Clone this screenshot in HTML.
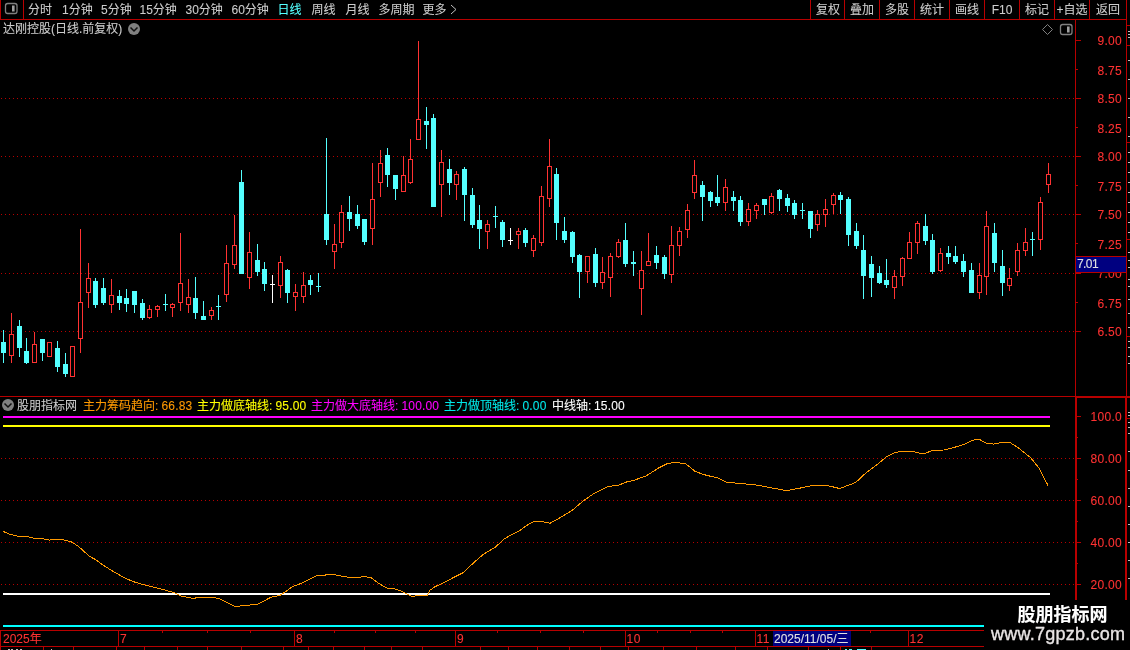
<!DOCTYPE html>
<html><head><meta charset="utf-8"><title>chart</title><style>
html,body{margin:0;padding:0;background:#000}
body{width:1130px;height:650px;position:relative;overflow:hidden;font-family:"Liberation Sans","Noto Sans CJK SC",sans-serif;font-size:12px}
svg{position:absolute;left:0;top:0}
.t{position:absolute;white-space:nowrap;line-height:12px;-webkit-text-stroke:0.1px currentColor}
#tx{position:absolute;left:0;top:0;width:1130px;height:650px;will-change:transform}
</style></head><body>
<svg width="1130" height="650" viewBox="0 0 1130 650" shape-rendering="crispEdges">
<rect x="0" y="19" width="1127" height="1" fill="#b80000"/>
<rect x="0" y="0" width="1" height="20" fill="#b80000"/>
<rect x="23" y="0" width="1" height="20" fill="#b80000"/>
<rect x="810" y="0" width="1" height="20" fill="#b80000"/>
<rect x="844" y="0" width="1" height="20" fill="#b80000"/>
<rect x="879" y="0" width="1" height="20" fill="#b80000"/>
<rect x="914" y="0" width="1" height="20" fill="#b80000"/>
<rect x="949" y="0" width="1" height="20" fill="#b80000"/>
<rect x="984" y="0" width="1" height="20" fill="#b80000"/>
<rect x="1019" y="0" width="1" height="20" fill="#b80000"/>
<rect x="1054" y="0" width="1" height="20" fill="#b80000"/>
<rect x="1089" y="0" width="1" height="20" fill="#b80000"/>
<rect x="1126" y="0" width="1" height="600" fill="#b80000"/>
<rect x="1075" y="20" width="1" height="580" fill="#b80000"/>
<rect x="1127" y="25" width="3" height="1" fill="#b80000"/>
<rect x="1127" y="45" width="3" height="1" fill="#b80000"/>
<rect x="1127" y="142" width="3" height="1" fill="#b80000"/>
<rect x="1127" y="239" width="3" height="1" fill="#b80000"/>
<rect x="1127" y="336" width="3" height="1" fill="#b80000"/>
<rect x="1127" y="418" width="3" height="1" fill="#b80000"/>
<rect x="1128" y="31" width="2" height="1" fill="#c0c0c0"/>
<rect x="1128" y="34" width="2" height="1" fill="#c0c0c0"/>
<rect x="1128" y="37" width="2" height="1" fill="#c0c0c0"/>
<rect x="1128" y="60" width="2" height="1" fill="#c0c0c0"/>
<rect x="1128" y="79" width="2" height="1" fill="#c0c0c0"/>
<rect x="1128" y="98" width="2" height="1" fill="#c0c0c0"/>
<rect x="1128" y="117" width="2" height="1" fill="#c0c0c0"/>
<rect x="1128" y="136" width="2" height="1" fill="#c0c0c0"/>
<rect x="1128" y="152" width="2" height="1" fill="#c0c0c0"/>
<rect x="1128" y="162" width="2" height="1" fill="#c0c0c0"/>
<rect x="1128" y="172" width="2" height="1" fill="#c0c0c0"/>
<rect x="1128" y="182" width="2" height="1" fill="#c0c0c0"/>
<rect x="1128" y="192" width="2" height="1" fill="#c0c0c0"/>
<rect x="1128" y="202" width="2" height="1" fill="#c0c0c0"/>
<rect x="1128" y="212" width="2" height="1" fill="#c0c0c0"/>
<rect x="1128" y="222" width="2" height="1" fill="#c0c0c0"/>
<rect x="1128" y="232" width="2" height="1" fill="#c0c0c0"/>
<rect x="1128" y="252" width="2" height="1" fill="#c0c0c0"/>
<rect x="1128" y="260" width="2" height="1" fill="#c0c0c0"/>
<rect x="1128" y="267" width="2" height="1" fill="#c0c0c0"/>
<rect x="1128" y="279" width="2" height="1" fill="#c0c0c0"/>
<rect x="1128" y="286" width="2" height="1" fill="#c0c0c0"/>
<rect x="1128" y="299" width="2" height="1" fill="#c0c0c0"/>
<rect x="1128" y="313" width="2" height="1" fill="#c0c0c0"/>
<rect x="1128" y="327" width="2" height="1" fill="#c0c0c0"/>
<rect x="1128" y="341" width="2" height="1" fill="#c0c0c0"/>
<rect x="1128" y="347" width="2" height="1" fill="#c0c0c0"/>
<rect x="1128" y="356" width="2" height="1" fill="#c0c0c0"/>
<rect x="1128" y="363" width="2" height="1" fill="#c0c0c0"/>
<rect x="1128" y="412" width="2" height="1" fill="#c0c0c0"/>
<rect x="1128" y="415" width="2" height="1" fill="#c0c0c0"/>
<rect x="1128" y="422" width="2" height="1" fill="#c0c0c0"/>
<rect x="1128" y="427" width="2" height="1" fill="#c0c0c0"/>
<rect x="1128" y="433" width="2" height="1" fill="#c0c0c0"/>
<rect x="1128" y="451" width="2" height="1" fill="#c0c0c0"/>
<rect x="1128" y="470" width="2" height="1" fill="#c0c0c0"/>
<rect x="1128" y="488" width="2" height="1" fill="#c0c0c0"/>
<rect x="1128" y="506" width="2" height="1" fill="#c0c0c0"/>
<rect x="1128" y="524" width="2" height="1" fill="#c0c0c0"/>
<rect x="1128" y="542" width="2" height="1" fill="#c0c0c0"/>
<rect x="1128" y="560" width="2" height="1" fill="#c0c0c0"/>
<rect x="1128" y="578" width="2" height="1" fill="#c0c0c0"/>
<rect x="0" y="396" width="1130" height="1" fill="#b80000"/>
<rect x="1075" y="397" width="55" height="1" fill="#b80000"/>
<rect x="1076" y="397" width="1" height="203" fill="#b80000"/>
<rect x="1125" y="397" width="1" height="203" fill="#b80000"/>
<rect x="0" y="630" width="987" height="1" fill="#b80000"/>
<rect x="0" y="646" width="987" height="1" fill="#b80000"/>
<rect x="0" y="630" width="1" height="21" fill="#b80000"/>
<path d="M1 98.5H1074" stroke="#b80000" stroke-width="1" stroke-dasharray="1 3" fill="none"/>
<path d="M1 156.5H1074" stroke="#b80000" stroke-width="1" stroke-dasharray="1 3" fill="none"/>
<path d="M1 214.5H1074" stroke="#b80000" stroke-width="1" stroke-dasharray="1 3" fill="none"/>
<path d="M1 273.5H1074" stroke="#b80000" stroke-width="1" stroke-dasharray="1 3" fill="none"/>
<path d="M1 331.5H1074" stroke="#b80000" stroke-width="1" stroke-dasharray="1 3" fill="none"/>
<rect x="1076" y="40" width="5" height="1" fill="#b80000"/>
<rect x="1076" y="69" width="2" height="1" fill="#b80000"/>
<rect x="1076" y="98" width="5" height="1" fill="#b80000"/>
<rect x="1076" y="127" width="2" height="1" fill="#b80000"/>
<rect x="1076" y="156" width="5" height="1" fill="#b80000"/>
<rect x="1076" y="185" width="2" height="1" fill="#b80000"/>
<rect x="1076" y="214" width="5" height="1" fill="#b80000"/>
<rect x="1076" y="243" width="2" height="1" fill="#b80000"/>
<rect x="1076" y="273" width="5" height="1" fill="#b80000"/>
<rect x="1076" y="302" width="2" height="1" fill="#b80000"/>
<rect x="1076" y="331" width="5" height="1" fill="#b80000"/>
<path d="M1 458.5H1074" stroke="#b80000" stroke-width="1" stroke-dasharray="1 3" fill="none"/>
<path d="M1 500.5H1074" stroke="#b80000" stroke-width="1" stroke-dasharray="1 3" fill="none"/>
<path d="M1 542.5H1074" stroke="#b80000" stroke-width="1" stroke-dasharray="1 3" fill="none"/>
<path d="M1 584.5H1074" stroke="#b80000" stroke-width="1" stroke-dasharray="1 3" fill="none"/>
<rect x="1077" y="416" width="4" height="1" fill="#b80000"/>
<rect x="1077" y="437" width="1" height="1" fill="#b80000"/>
<rect x="1077" y="458" width="4" height="1" fill="#b80000"/>
<rect x="1077" y="479" width="1" height="1" fill="#b80000"/>
<rect x="1077" y="500" width="4" height="1" fill="#b80000"/>
<rect x="1077" y="521" width="1" height="1" fill="#b80000"/>
<rect x="1077" y="542" width="4" height="1" fill="#b80000"/>
<rect x="1077" y="563" width="1" height="1" fill="#b80000"/>
<rect x="1077" y="584" width="4" height="1" fill="#b80000"/>
<rect x="3" y="330" width="1" height="33" fill="#54ffff"/>
<rect x="1" y="342" width="5" height="11" fill="#54ffff"/>
<rect x="11" y="313" width="1" height="21" fill="#ff3232"/>
<rect x="11" y="355" width="1" height="8" fill="#ff3232"/>
<rect x="9.5" y="334.5" width="4" height="21" fill="#000" stroke="#ff3232" stroke-width="1"/>
<rect x="19" y="320" width="1" height="37" fill="#54ffff"/>
<rect x="17" y="326" width="5" height="22" fill="#54ffff"/>
<rect x="26" y="338" width="1" height="26" fill="#54ffff"/>
<rect x="24" y="351" width="5" height="12" fill="#54ffff"/>
<rect x="34" y="332" width="1" height="12" fill="#ff3232"/>
<rect x="32.5" y="344.5" width="4" height="18" fill="#000" stroke="#ff3232" stroke-width="1"/>
<rect x="42" y="339" width="1" height="22" fill="#54ffff"/>
<rect x="40" y="339" width="5" height="14" fill="#54ffff"/>
<rect x="47.5" y="342.5" width="4" height="14" fill="#000" stroke="#ff3232" stroke-width="1"/>
<rect x="57" y="341" width="1" height="31" fill="#54ffff"/>
<rect x="55" y="348" width="5" height="19" fill="#54ffff"/>
<rect x="65" y="353" width="1" height="24" fill="#54ffff"/>
<rect x="63" y="364" width="5" height="10" fill="#54ffff"/>
<rect x="70.5" y="346.5" width="4" height="30" fill="#000" stroke="#ff3232" stroke-width="1"/>
<rect x="80" y="229" width="1" height="73" fill="#ff3232"/>
<rect x="80" y="338" width="1" height="15" fill="#ff3232"/>
<rect x="78.5" y="302.5" width="4" height="36" fill="#000" stroke="#ff3232" stroke-width="1"/>
<rect x="88" y="263" width="1" height="15" fill="#ff3232"/>
<rect x="88" y="292" width="1" height="16" fill="#ff3232"/>
<rect x="86.5" y="278.5" width="4" height="14" fill="#000" stroke="#ff3232" stroke-width="1"/>
<rect x="95" y="278" width="1" height="30" fill="#54ffff"/>
<rect x="93" y="281" width="5" height="24" fill="#54ffff"/>
<rect x="103" y="278" width="1" height="27" fill="#54ffff"/>
<rect x="101" y="288" width="5" height="15" fill="#54ffff"/>
<rect x="111" y="279" width="1" height="16" fill="#ff3232"/>
<rect x="111" y="304" width="1" height="9" fill="#ff3232"/>
<rect x="109.5" y="295.5" width="4" height="9" fill="#000" stroke="#ff3232" stroke-width="1"/>
<rect x="119" y="290" width="1" height="20" fill="#54ffff"/>
<rect x="117" y="296" width="5" height="7" fill="#54ffff"/>
<rect x="126" y="289" width="1" height="23" fill="#54ffff"/>
<rect x="124" y="298" width="5" height="6" fill="#54ffff"/>
<rect x="134" y="291" width="1" height="22" fill="#54ffff"/>
<rect x="132" y="291" width="5" height="14" fill="#54ffff"/>
<rect x="142" y="299" width="1" height="21" fill="#54ffff"/>
<rect x="140" y="303" width="5" height="15" fill="#54ffff"/>
<rect x="149" y="305" width="1" height="4" fill="#ff3232"/>
<rect x="149" y="317" width="1" height="2" fill="#ff3232"/>
<rect x="147.5" y="309.5" width="4" height="8" fill="#000" stroke="#ff3232" stroke-width="1"/>
<rect x="157" y="305" width="1" height="1" fill="#ff3232"/>
<rect x="157" y="309" width="1" height="8" fill="#ff3232"/>
<rect x="155.5" y="306.5" width="4" height="3" fill="#000" stroke="#ff3232" stroke-width="1"/>
<rect x="165" y="294" width="1" height="17" fill="#54ffff"/>
<rect x="163" y="304" width="5" height="1" fill="#54ffff"/>
<rect x="172" y="303" width="1" height="1" fill="#ff3232"/>
<rect x="172" y="307" width="1" height="10" fill="#ff3232"/>
<rect x="170.5" y="304.5" width="4" height="3" fill="#000" stroke="#ff3232" stroke-width="1"/>
<rect x="180" y="233" width="1" height="50" fill="#ff3232"/>
<rect x="180" y="302" width="1" height="9" fill="#ff3232"/>
<rect x="178.5" y="283.5" width="4" height="19" fill="#000" stroke="#ff3232" stroke-width="1"/>
<rect x="188" y="279" width="1" height="18" fill="#ff3232"/>
<rect x="188" y="304" width="1" height="9" fill="#ff3232"/>
<rect x="186.5" y="297.5" width="4" height="7" fill="#000" stroke="#ff3232" stroke-width="1"/>
<rect x="195" y="277" width="1" height="42" fill="#54ffff"/>
<rect x="193" y="298" width="5" height="15" fill="#54ffff"/>
<rect x="203" y="301" width="1" height="19" fill="#54ffff"/>
<rect x="201" y="316" width="5" height="4" fill="#54ffff"/>
<rect x="211" y="307" width="1" height="3" fill="#ff3232"/>
<rect x="211" y="315" width="1" height="5" fill="#ff3232"/>
<rect x="209.5" y="310.5" width="4" height="5" fill="#000" stroke="#ff3232" stroke-width="1"/>
<rect x="218" y="295" width="1" height="25" fill="#54ffff"/>
<rect x="216" y="306" width="5" height="1" fill="#54ffff"/>
<rect x="226" y="245" width="1" height="18" fill="#ff3232"/>
<rect x="226" y="294" width="1" height="8" fill="#ff3232"/>
<rect x="224.5" y="263.5" width="4" height="31" fill="#000" stroke="#ff3232" stroke-width="1"/>
<rect x="234" y="215" width="1" height="30" fill="#ff3232"/>
<rect x="234" y="264" width="1" height="5" fill="#ff3232"/>
<rect x="232.5" y="245.5" width="4" height="19" fill="#000" stroke="#ff3232" stroke-width="1"/>
<rect x="241" y="170" width="1" height="104" fill="#54ffff"/>
<rect x="239" y="182" width="5" height="92" fill="#54ffff"/>
<rect x="249" y="232" width="1" height="20" fill="#ff3232"/>
<rect x="249" y="277" width="1" height="12" fill="#ff3232"/>
<rect x="247.5" y="252.5" width="4" height="25" fill="#000" stroke="#ff3232" stroke-width="1"/>
<rect x="257" y="244" width="1" height="32" fill="#54ffff"/>
<rect x="255" y="260" width="5" height="12" fill="#54ffff"/>
<rect x="264" y="262" width="1" height="29" fill="#54ffff"/>
<rect x="262" y="269" width="5" height="15" fill="#54ffff"/>
<rect x="272" y="275" width="1" height="28" fill="#ffffff"/>
<rect x="270" y="284" width="5" height="1" fill="#ffffff"/>
<rect x="280" y="256" width="1" height="6" fill="#ff3232"/>
<rect x="280" y="285" width="1" height="13" fill="#ff3232"/>
<rect x="278.5" y="262.5" width="4" height="23" fill="#000" stroke="#ff3232" stroke-width="1"/>
<rect x="287" y="269" width="1" height="34" fill="#54ffff"/>
<rect x="285" y="270" width="5" height="23" fill="#54ffff"/>
<rect x="295" y="284" width="1" height="8" fill="#ff3232"/>
<rect x="295" y="296" width="1" height="15" fill="#ff3232"/>
<rect x="293.5" y="292.5" width="4" height="4" fill="#000" stroke="#ff3232" stroke-width="1"/>
<rect x="303" y="272" width="1" height="13" fill="#ff3232"/>
<rect x="303" y="296" width="1" height="7" fill="#ff3232"/>
<rect x="301.5" y="285.5" width="4" height="11" fill="#000" stroke="#ff3232" stroke-width="1"/>
<rect x="310" y="275" width="1" height="20" fill="#54ffff"/>
<rect x="308" y="280" width="5" height="5" fill="#54ffff"/>
<rect x="318" y="273" width="1" height="19" fill="#54ffff"/>
<rect x="316" y="286" width="5" height="1" fill="#54ffff"/>
<rect x="326" y="138" width="1" height="107" fill="#54ffff"/>
<rect x="324" y="214" width="5" height="26" fill="#54ffff"/>
<rect x="334" y="224" width="1" height="20" fill="#ff3232"/>
<rect x="334" y="251" width="1" height="18" fill="#ff3232"/>
<rect x="332.5" y="244.5" width="4" height="7" fill="#000" stroke="#ff3232" stroke-width="1"/>
<rect x="341" y="205" width="1" height="7" fill="#ff3232"/>
<rect x="341" y="242" width="1" height="6" fill="#ff3232"/>
<rect x="339.5" y="212.5" width="4" height="30" fill="#000" stroke="#ff3232" stroke-width="1"/>
<rect x="349" y="196" width="1" height="35" fill="#54ffff"/>
<rect x="347" y="212" width="5" height="7" fill="#54ffff"/>
<rect x="357" y="205" width="1" height="24" fill="#54ffff"/>
<rect x="355" y="214" width="5" height="12" fill="#54ffff"/>
<rect x="364" y="219" width="1" height="26" fill="#54ffff"/>
<rect x="362" y="219" width="5" height="23" fill="#54ffff"/>
<rect x="372" y="163" width="1" height="36" fill="#ff3232"/>
<rect x="372" y="228" width="1" height="17" fill="#ff3232"/>
<rect x="370.5" y="199.5" width="4" height="29" fill="#000" stroke="#ff3232" stroke-width="1"/>
<rect x="380" y="150" width="1" height="13" fill="#ff3232"/>
<rect x="380" y="182" width="1" height="15" fill="#ff3232"/>
<rect x="378.5" y="163.5" width="4" height="19" fill="#000" stroke="#ff3232" stroke-width="1"/>
<rect x="387" y="148" width="1" height="39" fill="#54ffff"/>
<rect x="385" y="155" width="5" height="20" fill="#54ffff"/>
<rect x="395" y="175" width="1" height="25" fill="#54ffff"/>
<rect x="393" y="175" width="5" height="14" fill="#54ffff"/>
<rect x="403" y="156" width="1" height="19" fill="#ff3232"/>
<rect x="401.5" y="175.5" width="4" height="16" fill="#000" stroke="#ff3232" stroke-width="1"/>
<rect x="410" y="139" width="1" height="20" fill="#ff3232"/>
<rect x="410" y="182" width="1" height="2" fill="#ff3232"/>
<rect x="408.5" y="159.5" width="4" height="23" fill="#000" stroke="#ff3232" stroke-width="1"/>
<rect x="418" y="41" width="1" height="78" fill="#ff3232"/>
<rect x="416.5" y="119.5" width="4" height="20" fill="#000" stroke="#ff3232" stroke-width="1"/>
<rect x="426" y="107" width="1" height="42" fill="#54ffff"/>
<rect x="424" y="121" width="5" height="4" fill="#54ffff"/>
<rect x="433" y="114" width="1" height="93" fill="#54ffff"/>
<rect x="431" y="118" width="5" height="89" fill="#54ffff"/>
<rect x="441" y="150" width="1" height="12" fill="#ff3232"/>
<rect x="441" y="184" width="1" height="33" fill="#ff3232"/>
<rect x="439.5" y="162.5" width="4" height="22" fill="#000" stroke="#ff3232" stroke-width="1"/>
<rect x="449" y="159" width="1" height="36" fill="#54ffff"/>
<rect x="447" y="169" width="5" height="14" fill="#54ffff"/>
<rect x="456" y="171" width="1" height="3" fill="#ff3232"/>
<rect x="456" y="184" width="1" height="16" fill="#ff3232"/>
<rect x="454.5" y="174.5" width="4" height="10" fill="#000" stroke="#ff3232" stroke-width="1"/>
<rect x="464" y="167" width="1" height="54" fill="#54ffff"/>
<rect x="462" y="169" width="5" height="26" fill="#54ffff"/>
<rect x="472" y="188" width="1" height="40" fill="#54ffff"/>
<rect x="470" y="195" width="5" height="30" fill="#54ffff"/>
<rect x="479" y="205" width="1" height="44" fill="#54ffff"/>
<rect x="477" y="220" width="5" height="9" fill="#54ffff"/>
<rect x="487" y="220" width="1" height="4" fill="#ff3232"/>
<rect x="487" y="231" width="1" height="18" fill="#ff3232"/>
<rect x="485.5" y="224.5" width="4" height="7" fill="#000" stroke="#ff3232" stroke-width="1"/>
<rect x="495" y="206" width="1" height="22" fill="#54ffff"/>
<rect x="493" y="216" width="5" height="1" fill="#54ffff"/>
<rect x="502" y="220" width="1" height="27" fill="#54ffff"/>
<rect x="500" y="222" width="5" height="18" fill="#54ffff"/>
<rect x="510" y="228" width="1" height="17" fill="#ffffff"/>
<rect x="508" y="240" width="5" height="1" fill="#ffffff"/>
<rect x="518" y="228" width="1" height="3" fill="#ff3232"/>
<rect x="518" y="234" width="1" height="15" fill="#ff3232"/>
<rect x="516.5" y="231.5" width="4" height="3" fill="#000" stroke="#ff3232" stroke-width="1"/>
<rect x="525" y="228" width="1" height="19" fill="#54ffff"/>
<rect x="523" y="230" width="5" height="13" fill="#54ffff"/>
<rect x="533" y="235" width="1" height="3" fill="#ff3232"/>
<rect x="533" y="250" width="1" height="7" fill="#ff3232"/>
<rect x="531.5" y="238.5" width="4" height="12" fill="#000" stroke="#ff3232" stroke-width="1"/>
<rect x="541" y="186" width="1" height="10" fill="#ff3232"/>
<rect x="541" y="242" width="1" height="4" fill="#ff3232"/>
<rect x="539.5" y="196.5" width="4" height="46" fill="#000" stroke="#ff3232" stroke-width="1"/>
<rect x="549" y="139" width="1" height="27" fill="#ff3232"/>
<rect x="549" y="198" width="1" height="9" fill="#ff3232"/>
<rect x="547.5" y="166.5" width="4" height="32" fill="#000" stroke="#ff3232" stroke-width="1"/>
<rect x="556" y="168" width="1" height="72" fill="#54ffff"/>
<rect x="554" y="174" width="5" height="49" fill="#54ffff"/>
<rect x="564" y="217" width="1" height="26" fill="#54ffff"/>
<rect x="562" y="231" width="5" height="9" fill="#54ffff"/>
<rect x="572" y="231" width="1" height="32" fill="#54ffff"/>
<rect x="570" y="232" width="5" height="25" fill="#54ffff"/>
<rect x="579" y="254" width="1" height="44" fill="#54ffff"/>
<rect x="577" y="255" width="5" height="17" fill="#54ffff"/>
<rect x="587" y="271" width="1" height="12" fill="#ff3232"/>
<rect x="585.5" y="256.5" width="4" height="15" fill="#000" stroke="#ff3232" stroke-width="1"/>
<rect x="595" y="248" width="1" height="39" fill="#54ffff"/>
<rect x="593" y="254" width="5" height="29" fill="#54ffff"/>
<rect x="602" y="257" width="1" height="15" fill="#ff3232"/>
<rect x="602" y="282" width="1" height="7" fill="#ff3232"/>
<rect x="600.5" y="272.5" width="4" height="10" fill="#000" stroke="#ff3232" stroke-width="1"/>
<rect x="610" y="253" width="1" height="3" fill="#ff3232"/>
<rect x="610" y="277" width="1" height="20" fill="#ff3232"/>
<rect x="608.5" y="256.5" width="4" height="21" fill="#000" stroke="#ff3232" stroke-width="1"/>
<rect x="618" y="239" width="1" height="3" fill="#ff3232"/>
<rect x="618" y="256" width="1" height="2" fill="#ff3232"/>
<rect x="616.5" y="242.5" width="4" height="14" fill="#000" stroke="#ff3232" stroke-width="1"/>
<rect x="625" y="223" width="1" height="44" fill="#54ffff"/>
<rect x="623" y="240" width="5" height="24" fill="#54ffff"/>
<rect x="633" y="251" width="1" height="25" fill="#54ffff"/>
<rect x="631" y="262" width="5" height="2" fill="#54ffff"/>
<rect x="641" y="251" width="1" height="19" fill="#ff3232"/>
<rect x="641" y="288" width="1" height="27" fill="#ff3232"/>
<rect x="639.5" y="270.5" width="4" height="18" fill="#000" stroke="#ff3232" stroke-width="1"/>
<rect x="648" y="233" width="1" height="28" fill="#ff3232"/>
<rect x="646.5" y="261.5" width="4" height="4" fill="#000" stroke="#ff3232" stroke-width="1"/>
<rect x="656" y="246" width="1" height="23" fill="#54ffff"/>
<rect x="654" y="255" width="5" height="8" fill="#54ffff"/>
<rect x="664" y="255" width="1" height="24" fill="#54ffff"/>
<rect x="662" y="257" width="5" height="17" fill="#54ffff"/>
<rect x="671" y="226" width="1" height="19" fill="#ff3232"/>
<rect x="671" y="274" width="1" height="9" fill="#ff3232"/>
<rect x="669.5" y="245.5" width="4" height="29" fill="#000" stroke="#ff3232" stroke-width="1"/>
<rect x="679" y="227" width="1" height="4" fill="#ff3232"/>
<rect x="679" y="245" width="1" height="11" fill="#ff3232"/>
<rect x="677.5" y="231.5" width="4" height="14" fill="#000" stroke="#ff3232" stroke-width="1"/>
<rect x="687" y="204" width="1" height="6" fill="#ff3232"/>
<rect x="687" y="229" width="1" height="9" fill="#ff3232"/>
<rect x="685.5" y="210.5" width="4" height="19" fill="#000" stroke="#ff3232" stroke-width="1"/>
<rect x="694" y="160" width="1" height="15" fill="#ff3232"/>
<rect x="694" y="192" width="1" height="7" fill="#ff3232"/>
<rect x="692.5" y="175.5" width="4" height="17" fill="#000" stroke="#ff3232" stroke-width="1"/>
<rect x="702" y="181" width="1" height="40" fill="#54ffff"/>
<rect x="700" y="185" width="5" height="12" fill="#54ffff"/>
<rect x="710" y="191" width="1" height="16" fill="#54ffff"/>
<rect x="708" y="192" width="5" height="9" fill="#54ffff"/>
<rect x="717" y="175" width="1" height="31" fill="#54ffff"/>
<rect x="715" y="197" width="5" height="6" fill="#54ffff"/>
<rect x="725" y="179" width="1" height="8" fill="#ff3232"/>
<rect x="725" y="202" width="1" height="9" fill="#ff3232"/>
<rect x="723.5" y="187.5" width="4" height="15" fill="#000" stroke="#ff3232" stroke-width="1"/>
<rect x="733" y="191" width="1" height="20" fill="#54ffff"/>
<rect x="731" y="197" width="5" height="4" fill="#54ffff"/>
<rect x="740" y="196" width="1" height="30" fill="#54ffff"/>
<rect x="738" y="200" width="5" height="22" fill="#54ffff"/>
<rect x="748" y="203" width="1" height="6" fill="#ff3232"/>
<rect x="748" y="221" width="1" height="5" fill="#ff3232"/>
<rect x="746.5" y="209.5" width="4" height="12" fill="#000" stroke="#ff3232" stroke-width="1"/>
<rect x="756" y="203" width="1" height="2" fill="#ff3232"/>
<rect x="756" y="210" width="1" height="9" fill="#ff3232"/>
<rect x="754.5" y="205.5" width="4" height="5" fill="#000" stroke="#ff3232" stroke-width="1"/>
<rect x="764" y="199" width="1" height="16" fill="#54ffff"/>
<rect x="762" y="199" width="5" height="6" fill="#54ffff"/>
<rect x="771" y="193" width="1" height="3" fill="#ff3232"/>
<rect x="771" y="212" width="1" height="2" fill="#ff3232"/>
<rect x="769.5" y="196.5" width="4" height="16" fill="#000" stroke="#ff3232" stroke-width="1"/>
<rect x="779" y="189" width="1" height="22" fill="#54ffff"/>
<rect x="777" y="190" width="5" height="9" fill="#54ffff"/>
<rect x="787" y="194" width="1" height="18" fill="#54ffff"/>
<rect x="785" y="198" width="5" height="8" fill="#54ffff"/>
<rect x="794" y="200" width="1" height="19" fill="#54ffff"/>
<rect x="792" y="203" width="5" height="12" fill="#54ffff"/>
<rect x="802" y="203" width="1" height="16" fill="#54ffff"/>
<rect x="800" y="210" width="5" height="1" fill="#54ffff"/>
<rect x="810" y="211" width="1" height="27" fill="#54ffff"/>
<rect x="808" y="211" width="5" height="18" fill="#54ffff"/>
<rect x="817" y="210" width="1" height="4" fill="#ff3232"/>
<rect x="817" y="224" width="1" height="7" fill="#ff3232"/>
<rect x="815.5" y="214.5" width="4" height="10" fill="#000" stroke="#ff3232" stroke-width="1"/>
<rect x="825" y="199" width="1" height="10" fill="#ff3232"/>
<rect x="825" y="214" width="1" height="13" fill="#ff3232"/>
<rect x="823.5" y="209.5" width="4" height="5" fill="#000" stroke="#ff3232" stroke-width="1"/>
<rect x="833" y="193" width="1" height="2" fill="#ff3232"/>
<rect x="833" y="204" width="1" height="10" fill="#ff3232"/>
<rect x="831.5" y="195.5" width="4" height="9" fill="#000" stroke="#ff3232" stroke-width="1"/>
<rect x="840" y="192" width="1" height="22" fill="#54ffff"/>
<rect x="838" y="195" width="5" height="5" fill="#54ffff"/>
<rect x="848" y="197" width="1" height="49" fill="#54ffff"/>
<rect x="846" y="199" width="5" height="36" fill="#54ffff"/>
<rect x="856" y="223" width="1" height="26" fill="#54ffff"/>
<rect x="854" y="231" width="5" height="15" fill="#54ffff"/>
<rect x="863" y="235" width="1" height="64" fill="#54ffff"/>
<rect x="861" y="250" width="5" height="26" fill="#54ffff"/>
<rect x="871" y="256" width="1" height="41" fill="#54ffff"/>
<rect x="869" y="264" width="5" height="14" fill="#54ffff"/>
<rect x="879" y="266" width="1" height="18" fill="#54ffff"/>
<rect x="877" y="273" width="5" height="10" fill="#54ffff"/>
<rect x="886" y="259" width="1" height="29" fill="#54ffff"/>
<rect x="884" y="280" width="5" height="5" fill="#54ffff"/>
<rect x="894" y="270" width="1" height="6" fill="#ff3232"/>
<rect x="894" y="287" width="1" height="12" fill="#ff3232"/>
<rect x="892.5" y="276.5" width="4" height="11" fill="#000" stroke="#ff3232" stroke-width="1"/>
<rect x="902" y="257" width="1" height="1" fill="#ff3232"/>
<rect x="902" y="276" width="1" height="10" fill="#ff3232"/>
<rect x="900.5" y="258.5" width="4" height="18" fill="#000" stroke="#ff3232" stroke-width="1"/>
<rect x="909" y="232" width="1" height="10" fill="#ff3232"/>
<rect x="907.5" y="242.5" width="4" height="16" fill="#000" stroke="#ff3232" stroke-width="1"/>
<rect x="917" y="221" width="1" height="2" fill="#ff3232"/>
<rect x="917" y="242" width="1" height="12" fill="#ff3232"/>
<rect x="915.5" y="223.5" width="4" height="19" fill="#000" stroke="#ff3232" stroke-width="1"/>
<rect x="925" y="214" width="1" height="31" fill="#54ffff"/>
<rect x="923" y="226" width="5" height="15" fill="#54ffff"/>
<rect x="932" y="234" width="1" height="40" fill="#54ffff"/>
<rect x="930" y="240" width="5" height="32" fill="#54ffff"/>
<rect x="940" y="248" width="1" height="5" fill="#ff3232"/>
<rect x="940" y="270" width="1" height="2" fill="#ff3232"/>
<rect x="938.5" y="253.5" width="4" height="17" fill="#000" stroke="#ff3232" stroke-width="1"/>
<rect x="948" y="246" width="1" height="18" fill="#54ffff"/>
<rect x="946" y="253" width="5" height="4" fill="#54ffff"/>
<rect x="955" y="246" width="1" height="18" fill="#54ffff"/>
<rect x="953" y="256" width="5" height="6" fill="#54ffff"/>
<rect x="963" y="254" width="1" height="23" fill="#54ffff"/>
<rect x="961" y="261" width="5" height="11" fill="#54ffff"/>
<rect x="971" y="263" width="1" height="30" fill="#54ffff"/>
<rect x="969" y="270" width="5" height="23" fill="#54ffff"/>
<rect x="979" y="263" width="1" height="12" fill="#ff3232"/>
<rect x="979" y="292" width="1" height="7" fill="#ff3232"/>
<rect x="977.5" y="275.5" width="4" height="17" fill="#000" stroke="#ff3232" stroke-width="1"/>
<rect x="986" y="211" width="1" height="15" fill="#ff3232"/>
<rect x="986" y="276" width="1" height="19" fill="#ff3232"/>
<rect x="984.5" y="226.5" width="4" height="50" fill="#000" stroke="#ff3232" stroke-width="1"/>
<rect x="994" y="223" width="1" height="49" fill="#54ffff"/>
<rect x="992" y="233" width="5" height="30" fill="#54ffff"/>
<rect x="1002" y="250" width="1" height="46" fill="#54ffff"/>
<rect x="1000" y="266" width="5" height="17" fill="#54ffff"/>
<rect x="1009" y="268" width="1" height="10" fill="#ff3232"/>
<rect x="1009" y="285" width="1" height="6" fill="#ff3232"/>
<rect x="1007.5" y="278.5" width="4" height="7" fill="#000" stroke="#ff3232" stroke-width="1"/>
<rect x="1017" y="243" width="1" height="7" fill="#ff3232"/>
<rect x="1017" y="271" width="1" height="5" fill="#ff3232"/>
<rect x="1015.5" y="250.5" width="4" height="21" fill="#000" stroke="#ff3232" stroke-width="1"/>
<rect x="1025" y="228" width="1" height="14" fill="#ff3232"/>
<rect x="1025" y="250" width="1" height="6" fill="#ff3232"/>
<rect x="1023.5" y="242.5" width="4" height="8" fill="#000" stroke="#ff3232" stroke-width="1"/>
<rect x="1032" y="232" width="1" height="24" fill="#54ffff"/>
<rect x="1030" y="239" width="5" height="1" fill="#54ffff"/>
<rect x="1040" y="197" width="1" height="5" fill="#ff3232"/>
<rect x="1040" y="239" width="1" height="11" fill="#ff3232"/>
<rect x="1038.5" y="202.5" width="4" height="37" fill="#000" stroke="#ff3232" stroke-width="1"/>
<rect x="1048" y="163" width="1" height="11" fill="#ff3232"/>
<rect x="1048" y="184" width="1" height="9" fill="#ff3232"/>
<rect x="1046.5" y="174.5" width="4" height="10" fill="#000" stroke="#ff3232" stroke-width="1"/>
<rect x="3" y="416" width="1047" height="2" fill="#ff00ff"/>
<rect x="3" y="425" width="1047" height="2" fill="#ffff00"/>
<rect x="3" y="593" width="1047" height="2" fill="#ffffff"/>
<rect x="3" y="625" width="984" height="2" fill="#00ffff"/>
<path d="M3.2 531.5 L9.9 534.2 L18.6 536.4 L27.3 536.7 L34.7 538.4 L43.4 538.9 L49.6 540.1 L57.0 539.1 L64.4 540.1 L71.9 542.1 L79.3 547.1 L89.2 556.2 L95.4 559.5 L104.0 565.7 L114.0 571.9 L123.9 577.6 L133.8 581.8 L143.7 584.7 L153.6 587.2 L163.5 589.7 L173.4 592.4 L180.9 596.1 L193.3 598.4 L200.7 597.1 L213.1 597.4 L219.3 598.6 L235.4 606.5 L247.8 605.3 L257.7 604.1 L271.3 597.1 L279.9 595.4 L284.9 592.2 L292.3 586.7 L302.2 583.0 L309.6 579.3 L317.1 575.6 L324.5 575.1 L333.2 574.3 L341.9 576.3 L349.3 577.3 L359.2 577.3 L364.2 576.3 L371.6 578.0 L379.0 583.5 L386.5 588.0 L396.4 589.2 L403.8 592.2 L411.2 596.2 L418.7 595.8 L427.3 595.6 L429.8 590.4 L434.8 586.7 L443.4 583.0 L453.3 577.6 L463.3 572.6 L473.2 563.2 L483.1 554.5 L495.5 547.1 L504.1 538.9 L511.6 534.7 L520.2 530.2 L527.7 524.8 L533.9 521.6 L542.5 521.6 L549.9 523.3 L559.8 517.9 L572.2 510.4 L582.1 501.8 L594.5 493.1 L606.9 486.9 L619.3 484.9 L626.7 481.9 L634.2 480.2 L646.5 475.7 L658.9 467.8 L667.6 463.4 L676.3 462.4 L686.2 464.1 L694.9 471.3 L703.5 474.5 L718.4 478.2 L727.1 482.4 L743.2 483.7 L758.0 485.2 L772.9 488.1 L786.5 490.6 L797.7 488.6 L812.4 485.5 L827.3 485.5 L839.6 488.5 L855.7 482.5 L865.7 473.1 L876.8 464.9 L886.7 456.5 L894.2 452.8 L901.6 451.3 L911.5 451.3 L923.9 454.0 L932.6 450.3 L943.7 450.0 L953.6 447.6 L963.5 444.6 L973.4 440.1 L978.9 439.1 L985.8 442.9 L993.3 444.1 L1001.9 442.4 L1010.1 442.6 L1018.0 447.6 L1030.4 457.5 L1039.1 468.1 L1048.0 485.5" stroke="#ff9900" stroke-width="1" fill="none" stroke-linejoin="round"/>
<rect x="118" y="630" width="1" height="17" fill="#b80000"/>
<rect x="294" y="630" width="1" height="17" fill="#b80000"/>
<rect x="455" y="630" width="1" height="17" fill="#b80000"/>
<rect x="625" y="630" width="1" height="17" fill="#b80000"/>
<rect x="755" y="630" width="1" height="17" fill="#b80000"/>
<rect x="908" y="630" width="1" height="17" fill="#b80000"/>
<rect x="162" y="631" width="1" height="2" fill="#b80000"/>
<rect x="207" y="631" width="1" height="2" fill="#b80000"/>
<rect x="250" y="631" width="1" height="2" fill="#b80000"/>
<rect x="334" y="631" width="1" height="2" fill="#b80000"/>
<rect x="375" y="631" width="1" height="2" fill="#b80000"/>
<rect x="415" y="631" width="1" height="2" fill="#b80000"/>
<rect x="497" y="631" width="1" height="2" fill="#b80000"/>
<rect x="540" y="631" width="1" height="2" fill="#b80000"/>
<rect x="583" y="631" width="1" height="2" fill="#b80000"/>
<rect x="657" y="631" width="1" height="2" fill="#b80000"/>
<rect x="690" y="631" width="1" height="2" fill="#b80000"/>
<rect x="722" y="631" width="1" height="2" fill="#b80000"/>
<rect x="870" y="631" width="1" height="2" fill="#b80000"/>
<rect x="43" y="647" width="1" height="4" fill="#b80000"/>
<rect x="73" y="647" width="1" height="4" fill="#b80000"/>
<rect x="116" y="647" width="1" height="4" fill="#b80000"/>
<rect x="144" y="647" width="1" height="4" fill="#b80000"/>
<rect x="177" y="647" width="1" height="4" fill="#b80000"/>
<rect x="207" y="647" width="1" height="4" fill="#b80000"/>
<rect x="241" y="647" width="1" height="4" fill="#b80000"/>
<rect x="283" y="647" width="1" height="4" fill="#b80000"/>
<rect x="308" y="647" width="1" height="4" fill="#b80000"/>
<rect x="333" y="647" width="1" height="4" fill="#b80000"/>
<rect x="364" y="647" width="1" height="4" fill="#b80000"/>
<rect x="391" y="647" width="1" height="4" fill="#b80000"/>
<rect x="422" y="647" width="1" height="4" fill="#b80000"/>
<rect x="480" y="647" width="1" height="4" fill="#b80000"/>
<rect x="508" y="647" width="1" height="4" fill="#b80000"/>
<rect x="537" y="647" width="1" height="4" fill="#b80000"/>
<rect x="569" y="647" width="1" height="4" fill="#b80000"/>
<rect x="600" y="647" width="1" height="4" fill="#b80000"/>
<rect x="628" y="647" width="1" height="4" fill="#b80000"/>
<rect x="663" y="647" width="1" height="4" fill="#b80000"/>
<rect x="696" y="647" width="1" height="4" fill="#b80000"/>
<rect x="735" y="647" width="1" height="4" fill="#b80000"/>
<rect x="767" y="647" width="1" height="4" fill="#b80000"/>
<rect x="871" y="647" width="1" height="4" fill="#b80000"/>
<rect x="808" y="647" width="1" height="4" fill="#b80000"/>
<rect x="840" y="647" width="1" height="4" fill="#b80000"/>
<rect x="8" y="649" width="2" height="1" fill="#c0c0c0"/>
<rect x="11" y="649" width="2" height="1" fill="#c0c0c0"/>
<rect x="16" y="649" width="2" height="1" fill="#c0c0c0"/>
<rect x="20" y="649" width="2" height="1" fill="#c0c0c0"/>
<rect x="51" y="649" width="1" height="1" fill="#c0c0c0"/>
<rect x="828" y="649" width="1" height="1" fill="#c0c0c0"/>
<rect x="845" y="649" width="2" height="1" fill="#54ffff"/>
<rect x="849" y="649" width="3" height="1" fill="#54ffff"/>
<rect x="857" y="649" width="9" height="1" fill="#54ffff"/>
<rect x="773" y="631" width="78" height="15" fill="#000080"/>
<rect x="984" y="600" width="146" height="50" fill="#000"/>
<g shape-rendering="geometricPrecision">
<rect x="5.5" y="3.5" width="11.5" height="10" rx="2.2" fill="none" stroke="#808080" stroke-width="1.3"/>
<rect x="12" y="5.5" width="2.6" height="6" fill="#a0a0a0"/>
<rect x="1060.5" y="24.5" width="11.5" height="10" rx="2.2" fill="none" stroke="#808080" stroke-width="1.3"/>
<rect x="1067" y="26.5" width="2.6" height="6" fill="#a0a0a0"/>
<path d="M1047.5 24.5L1052.5 29.5L1047.5 34.5L1042.5 29.5Z" fill="none" stroke="#808080" stroke-width="1"/>
<circle cx="134" cy="29" r="6" fill="#808080"/>
<path d="M130.5 27.5L134 31L137.5 27.5" fill="none" stroke="#101010" stroke-width="1.5"/>
<circle cx="8" cy="405" r="6" fill="#808080"/>
<path d="M4.5 403.5L8 407L11.5 403.5" fill="none" stroke="#101010" stroke-width="1.5"/>
<path d="M451 5L456 9.5L451 14" fill="none" stroke="#c0c0c0" stroke-width="1"/>
</g>
</svg>
<div id="tx">
<div class="t" style="left:28px;top:4px;color:#cccccc;font-size:12px;line-height:12px;">分时</div>
<div class="t" style="left:62px;top:4px;color:#cccccc;font-size:12px;line-height:12px;">1分钟</div>
<div class="t" style="left:101px;top:4px;color:#cccccc;font-size:12px;line-height:12px;">5分钟</div>
<div class="t" style="left:139.5px;top:4px;color:#cccccc;font-size:12px;line-height:12px;">15分钟</div>
<div class="t" style="left:185.5px;top:4px;color:#cccccc;font-size:12px;line-height:12px;">30分钟</div>
<div class="t" style="left:231.5px;top:4px;color:#cccccc;font-size:12px;line-height:12px;">60分钟</div>
<div class="t" style="left:277.5px;top:4px;color:#54ffff;font-size:12px;line-height:12px;">日线</div>
<div class="t" style="left:311.5px;top:4px;color:#cccccc;font-size:12px;line-height:12px;">周线</div>
<div class="t" style="left:345.5px;top:4px;color:#cccccc;font-size:12px;line-height:12px;">月线</div>
<div class="t" style="left:378.5px;top:4px;color:#cccccc;font-size:12px;line-height:12px;">多周期</div>
<div class="t" style="left:422.5px;top:4px;color:#cccccc;font-size:12px;line-height:12px;">更多</div>
<div class="t" style="left:788px;width:80px;text-align:center;top:4px;color:#cccccc">复权</div>
<div class="t" style="left:822px;width:80px;text-align:center;top:4px;color:#cccccc">叠加</div>
<div class="t" style="left:857px;width:80px;text-align:center;top:4px;color:#cccccc">多股</div>
<div class="t" style="left:892px;width:80px;text-align:center;top:4px;color:#cccccc">统计</div>
<div class="t" style="left:927px;width:80px;text-align:center;top:4px;color:#cccccc">画线</div>
<div class="t" style="left:962px;width:80px;text-align:center;top:4px;color:#cccccc">F10</div>
<div class="t" style="left:997px;width:80px;text-align:center;top:4px;color:#cccccc">标记</div>
<div class="t" style="left:1032px;width:80px;text-align:center;top:4px;color:#cccccc">+自选</div>
<div class="t" style="left:1068px;width:80px;text-align:center;top:4px;color:#cccccc">返回</div>
<div class="t" style="left:3px;top:23px;color:#cccccc;font-size:12px;line-height:12px;">达刚控股(日线.前复权)</div>
<div class="t" style="left:1060px;width:62px;text-align:right;letter-spacing:.3px;top:35px;color:#ff3232">9.00</div>
<div class="t" style="left:1060px;width:62px;text-align:right;letter-spacing:.3px;top:65px;color:#ff3232">8.75</div>
<div class="t" style="left:1060px;width:62px;text-align:right;letter-spacing:.3px;top:93px;color:#ff3232">8.50</div>
<div class="t" style="left:1060px;width:62px;text-align:right;letter-spacing:.3px;top:123px;color:#ff3232">8.25</div>
<div class="t" style="left:1060px;width:62px;text-align:right;letter-spacing:.3px;top:151px;color:#ff3232">8.00</div>
<div class="t" style="left:1060px;width:62px;text-align:right;letter-spacing:.3px;top:181px;color:#ff3232">7.75</div>
<div class="t" style="left:1060px;width:62px;text-align:right;letter-spacing:.3px;top:209px;color:#ff3232">7.50</div>
<div class="t" style="left:1060px;width:62px;text-align:right;letter-spacing:.3px;top:239px;color:#ff3232">7.25</div>
<div class="t" style="left:1060px;width:62px;text-align:right;letter-spacing:.3px;top:268px;color:#ff3232">7.00</div>
<div class="t" style="left:1060px;width:62px;text-align:right;letter-spacing:.3px;top:298px;color:#ff3232">6.75</div>
<div class="t" style="left:1060px;width:62px;text-align:right;letter-spacing:.3px;top:326px;color:#ff3232">6.50</div>
<div class="t" style="left:1060px;width:62px;text-align:right;letter-spacing:.3px;top:411px;color:#ff3232">100.0</div>
<div class="t" style="left:1060px;width:62px;text-align:right;letter-spacing:.3px;top:453px;color:#ff3232">80.00</div>
<div class="t" style="left:1060px;width:62px;text-align:right;letter-spacing:.3px;top:495px;color:#ff3232">60.00</div>
<div class="t" style="left:1060px;width:62px;text-align:right;letter-spacing:.3px;top:537px;color:#ff3232">40.00</div>
<div class="t" style="left:1060px;width:62px;text-align:right;letter-spacing:.3px;top:579px;color:#ff3232">20.00</div>
<div style="position:absolute;left:1075px;top:256px;width:50px;height:15px;background:#000080;border:1px solid #b80000"></div>
<div class="t" style="left:1077px;top:258px;color:#e0e0e0;font-size:12px;line-height:12px;letter-spacing:-0.6px;">7.01</div>
<div class="t" style="left:17px;top:400px;color:#cccccc;font-size:12px;line-height:12px;">股朋指标网</div>
<div class="t" style="left:83px;top:400px;color:#ff9900;font-size:12px;line-height:12px;">主力筹码趋向:</div>
<div class="t" style="left:161.5px;top:400px;color:#ff9900;font-size:12px;line-height:12px;letter-spacing:.15px;">66.83</div>
<div class="t" style="left:197px;top:400px;color:#ffff00;font-size:12px;line-height:12px;">主力做底轴线:</div>
<div class="t" style="left:275.5px;top:400px;color:#ffff00;font-size:12px;line-height:12px;letter-spacing:.15px;">95.00</div>
<div class="t" style="left:311px;top:400px;color:#ff00ff;font-size:12px;line-height:12px;">主力做大底轴线:</div>
<div class="t" style="left:401.5px;top:400px;color:#ff00ff;font-size:12px;line-height:12px;letter-spacing:.15px;">100.00</div>
<div class="t" style="left:444px;top:400px;color:#00e8e8;font-size:12px;line-height:12px;">主力做顶轴线:</div>
<div class="t" style="left:522.5px;top:400px;color:#00e8e8;font-size:12px;line-height:12px;letter-spacing:.15px;">0.00</div>
<div class="t" style="left:552px;top:400px;color:#ffffff;font-size:12px;line-height:12px;">中线轴:</div>
<div class="t" style="left:594px;top:400px;color:#ffffff;font-size:12px;line-height:12px;letter-spacing:.15px;">15.00</div>
<div class="t" style="left:3px;top:633px;color:#ff3232;font-size:12px;line-height:12px;">2025年</div>
<div class="t" style="left:120px;top:633px;color:#ff3232;font-size:12px;line-height:12px;letter-spacing:.5px;">7</div>
<div class="t" style="left:296px;top:633px;color:#ff3232;font-size:12px;line-height:12px;letter-spacing:.5px;">8</div>
<div class="t" style="left:457px;top:633px;color:#ff3232;font-size:12px;line-height:12px;letter-spacing:.5px;">9</div>
<div class="t" style="left:626.5px;top:633px;color:#ff3232;font-size:12px;line-height:12px;letter-spacing:.5px;">10</div>
<div class="t" style="left:756.5px;top:633px;color:#ff3232;font-size:12px;line-height:12px;letter-spacing:.5px;">11</div>
<div class="t" style="left:909.5px;top:633px;color:#ff3232;font-size:12px;line-height:12px;letter-spacing:.5px;">12</div>
<div class="t" style="left:774px;top:633px;color:#e0e0e0;font-size:12px;line-height:12px;">2025/11/05/三</div>
<div class="t" style="left:1017.5px;top:606px;color:#ffffff;font-size:18px;line-height:18px;font-weight:bold;">股朋指标网</div>
<div class="t" style="left:991px;top:625px;color:#e8e4e4;font-size:18px;line-height:18px;letter-spacing:0.25px;-webkit-text-stroke:0.35px #e8e4e4;">www.7gpzb.com</div>
</div>
</body></html>
